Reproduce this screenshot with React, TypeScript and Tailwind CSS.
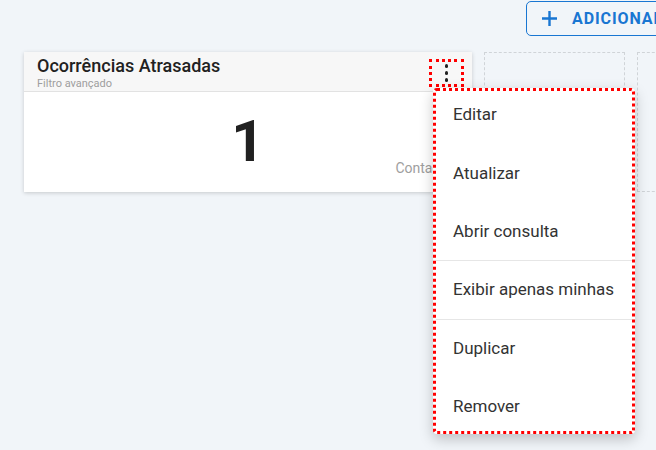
import React from "react";

const menuItems = [
  { label: "Editar", divider: false },
  { label: "Atualizar", divider: false },
  { label: "Abrir consulta", divider: true },
  { label: "Exibir apenas minhas", divider: true },
  { label: "Duplicar", divider: false },
  { label: "Remover", divider: false },
];

export default function App() {
  return (
    <div
      className="relative w-[656px] h-[450px] overflow-hidden bg-[#f1f5f9]"
      style={{ fontFamily: "Roboto, 'Liberation Sans', sans-serif" }}
    >
      {/* top toolbar */}
      <div className="flex pl-[526px] pt-px">
        <button className="flex items-center gap-[14px] h-[35px] pl-[14px] pr-[16px] border border-[#1976d2] rounded-[5px] text-[#1976d2] whitespace-nowrap shrink-0">
          <svg width="17" height="17" viewBox="0 0 17 17" fill="none">
            <path d="M8.5 1v15M1 8.5h15" stroke="#1976d2" strokeWidth="2.4" />
          </svg>
          <span className="text-[16px] font-bold tracking-[0.9px]">ADICIONAR</span>
        </button>
      </div>

      {/* widgets grid */}
      <div className="flex gap-3 pl-6 mt-4">
        <div className="w-[448px] h-[140px] shrink-0 bg-white shadow-[0_1px_4px_rgba(0,0,0,0.18)] flex flex-col">
          <div className="h-10 bg-[#f7f7f7] border-b border-[#e2e2e2] flex items-start pl-[13px] pr-2">
            <div className="flex-1 pt-[3px]">
              <div className="text-[18px] leading-[22px] font-medium text-[#212121]">Ocorrências Atrasadas</div>
              <div className="text-[11px] leading-[13px] text-[#9e9e9e]">Filtro avançado</div>
            </div>
            <button className="mt-[7px] w-[35px] h-[28px] border-[3px] border-dotted border-[#ff0000] flex flex-col items-center justify-center gap-[3.5px]">
              <span className="w-[3.5px] h-[3.5px] rounded-full bg-[#222]" />
              <span className="w-[3.5px] h-[3.5px] rounded-full bg-[#222]" />
              <span className="w-[3.5px] h-[3.5px] rounded-full bg-[#222]" />
            </button>
          </div>
          <div className="relative flex-1 flex items-center justify-center">
            <span className="text-[58px] font-bold leading-none text-[#212121] -mt-[2px]">1</span>
            <span className="absolute right-[12px] bottom-[13px] text-[14px] text-[#9e9e9e]">Contagem</span>
          </div>
        </div>
        <div className="w-[141px] h-[140px] shrink-0 border border-dashed border-[#d0d4d8]" />
        <div className="w-[141px] h-[140px] shrink-0 border border-dashed border-[#d0d4d8]" />
      </div>

      {/* dropdown menu */}
      <div className="absolute left-[433px] top-[88px] w-[202px] h-[346px] bg-white rounded-[4px] border-[3px] border-dotted border-[#ff0000] overflow-hidden shadow-[0_5px_14px_rgba(0,0,0,0.22)]">
        <div className="-mt-[5px]">
          {menuItems.map((item) => (
            <div
              key={item.label}
              className={`h-[58.4px] flex items-center pl-[17px] text-[17px] text-[#333] ${item.divider ? "border-b border-[#e6e6e6]" : ""}`}
            >
              {item.label}
            </div>
          ))}
        </div>
      </div>
    </div>
  );
}
